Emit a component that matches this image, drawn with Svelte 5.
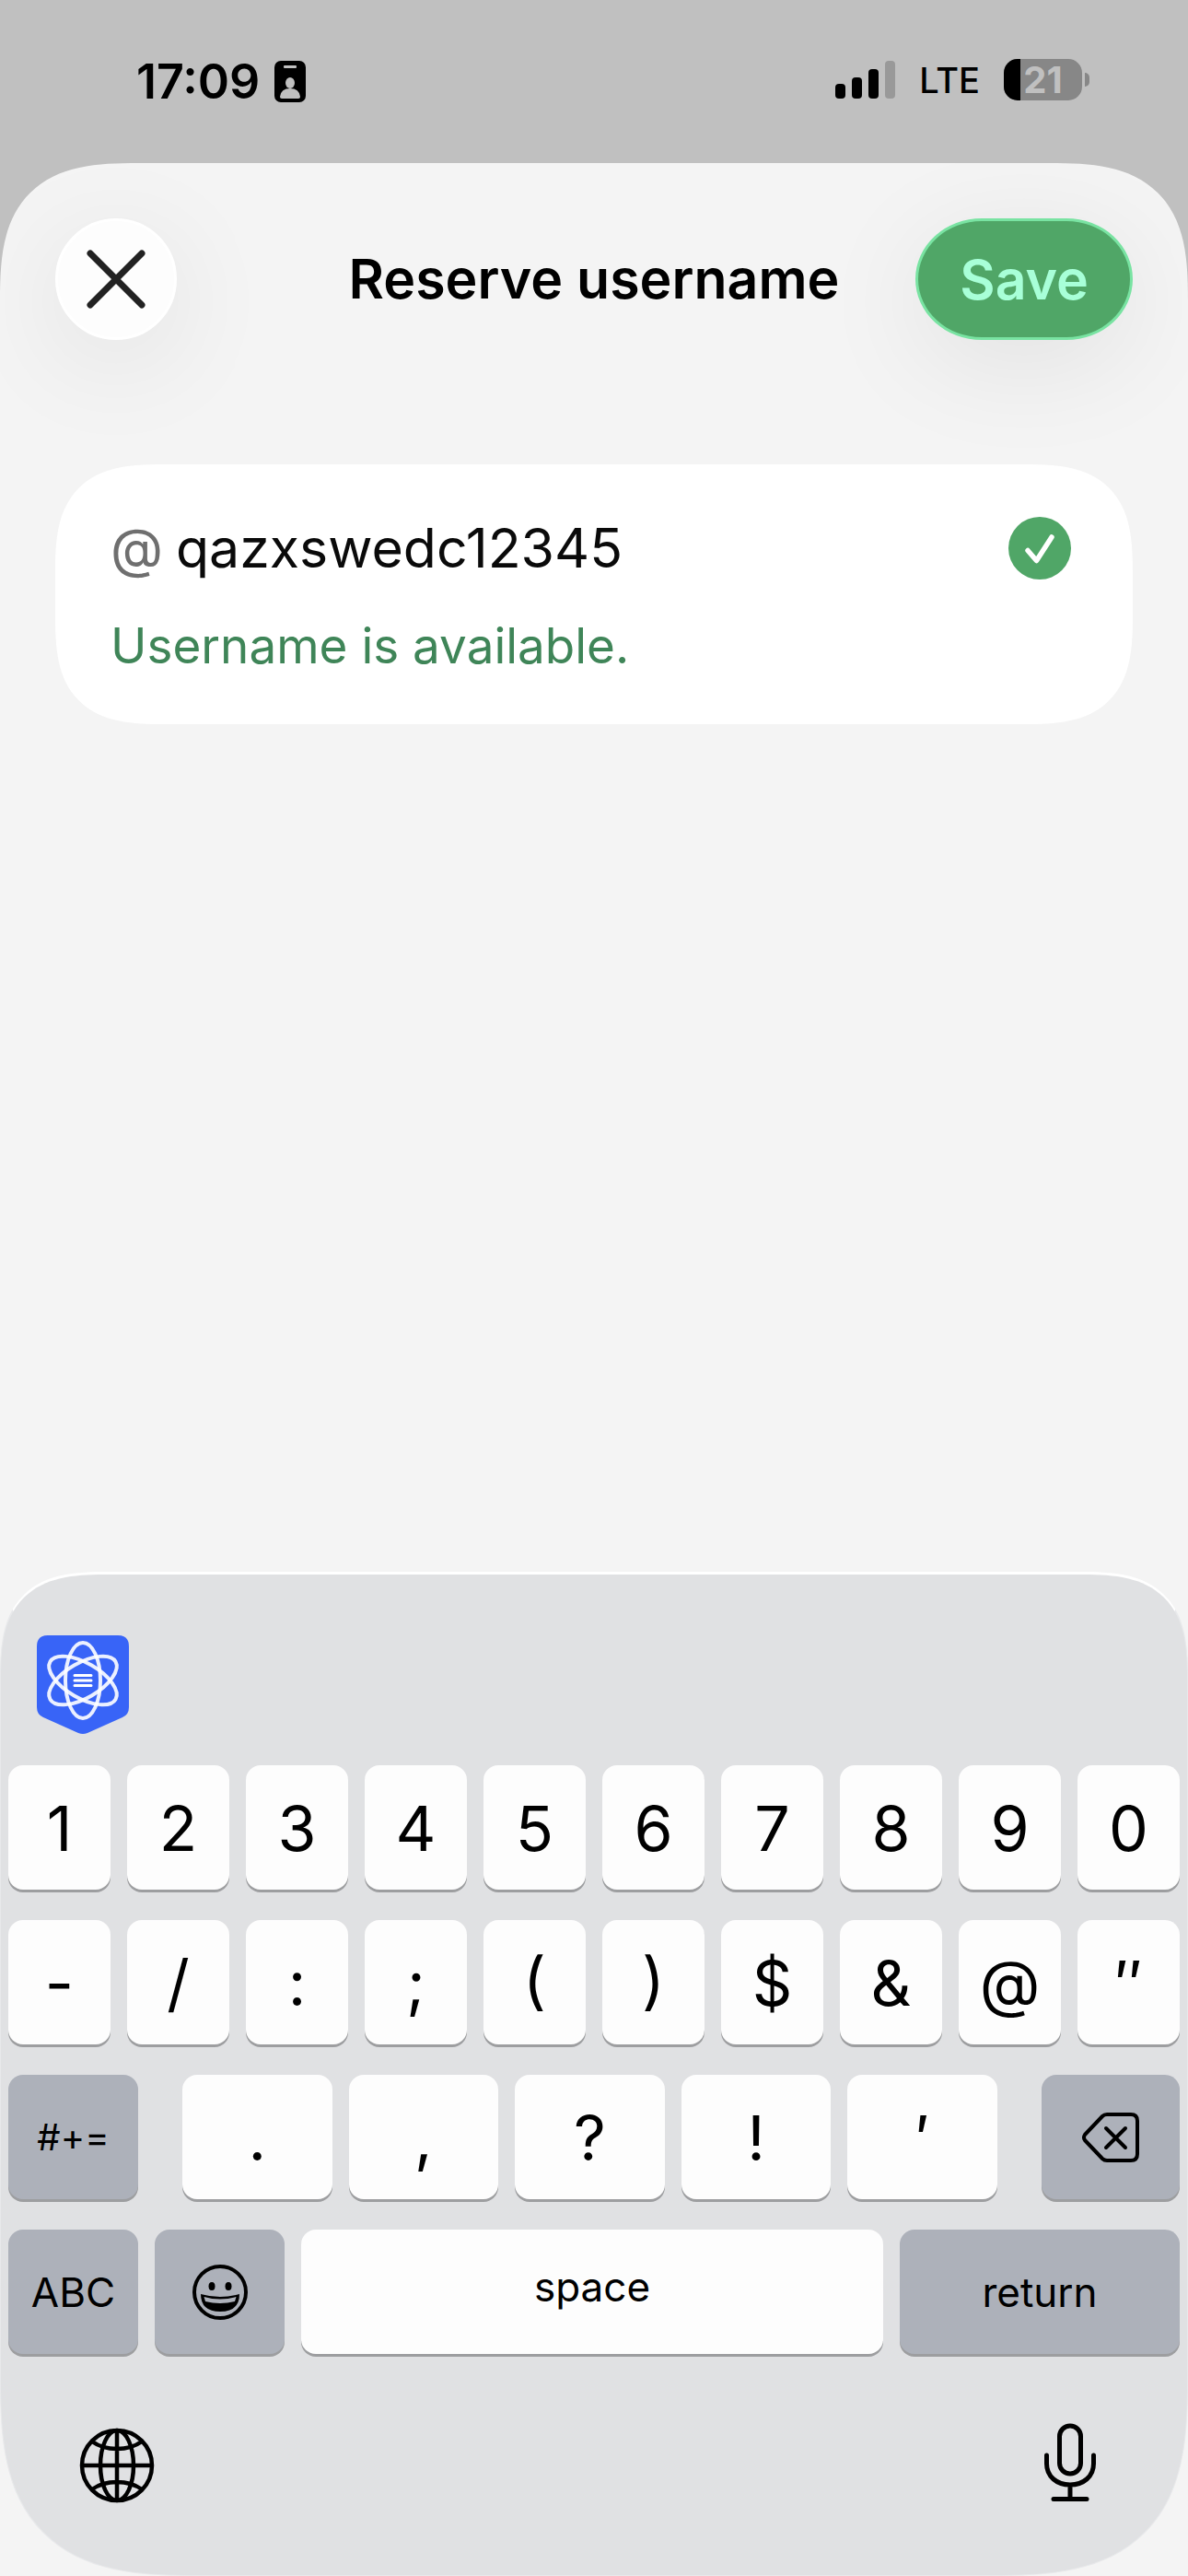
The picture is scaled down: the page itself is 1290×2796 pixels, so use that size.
<script lang="ts">
	let username = $state('qazxswedc12345');
	const battery = 21;
	const bars = [16, 23, 32, 41];
	const digits = ['1', '2', '3', '4', '5', '6', '7', '8', '9', '0'];
	const symbols = ['-', '/', ':', ';', '(', ')', '$', '&', '@', '″'];
	const punctuation = ['.', ',', '?', '!', '′'];

	function type(char: string) {
		username += char;
	}
	function erase() {
		username = username.slice(0, -1);
	}
</script>

<div class="screen">
	<header class="status">
		<div class="group">
			<time>17:09</time>
			<svg width="34" height="45" viewBox="0 0 34 45" aria-hidden="true">
				<rect width="34" height="45" rx="7" />
				<rect x="10" y="5" width="14" height="3" rx="1" fill="#c0c0c0" />
				<ellipse cx="17" cy="24" rx="5" ry="6" fill="#c0c0c0" />
				<path d="M6 39q1-9 11-9t11 9q0 2-2 2H8q-2 0-2-2z" fill="#c0c0c0" />
			</svg>
		</div>
		<div class="group right">
			<div class="signal">
				{#each bars as height, i}
					<span class:off={i === 3} style="height: {height}px"></span>
				{/each}
			</div>
			<span class="network">LTE</span>
			<div class="battery">
				<div class="cell">
					<div class="level" style="width: {battery}%"></div>
					<span>{battery}</span>
				</div>
				<div class="nub"></div>
			</div>
		</div>
	</header>

	<main class="sheet">
		<div class="bar">
			<button class="close" aria-label="Close">
				<svg width="66" height="66" viewBox="0 0 66 66" aria-hidden="true">
					<path d="M5 5l56 56M61 5L5 61" stroke="#222" stroke-width="7" stroke-linecap="round" />
				</svg>
			</button>
			<h1>Reserve username</h1>
			<button class="save">Save</button>
		</div>

		<section class="card">
			<div class="field">
				<label for="username">@</label>
				<input id="username" type="text" autocomplete="off" spellcheck="false" bind:value={username} />
				<svg width="68" height="68" viewBox="0 0 68 68" aria-hidden="true">
					<circle cx="34" cy="34" r="34" fill="#50a667" />
					<path
						d="M21 36.5l9.5 11L47 22"
						fill="none"
						stroke="#fff"
						stroke-width="5.5"
						stroke-linecap="round"
						stroke-linejoin="round"
					/>
				</svg>
			</div>
			<p>Username is available.</p>
		</section>
	</main>

	<div class="keyboard">
		<div class="tools">
			<button class="plain" aria-label="Assistant">
				<svg width="100" height="108" viewBox="0 0 100 108" aria-hidden="true">
					<path
						d="M12 0h76q12 0 12 12v66q0 8-7 11l-38 17q-5 2-10 0L7 89q-7-3-7-11V12Q0 0 12 0z"
						fill="#3864f7"
					/>
					<g fill="none" stroke="#fff" stroke-opacity="0.9" stroke-width="4">
						<ellipse cx="50" cy="49" rx="19" ry="41" />
						<ellipse cx="50" cy="49" rx="19" ry="41" transform="rotate(60 50 49)" />
						<ellipse cx="50" cy="49" rx="19" ry="41" transform="rotate(-60 50 49)" />
					</g>
					<path d="M41 43.5h18M41 49h18M41 54.5h18" stroke="#fff" stroke-width="3" stroke-linecap="round" />
				</svg>
			</button>
		</div>

		<div class="row">
			{#each digits as key}
				<button class="key" onclick={() => type(key)}>{key}</button>
			{/each}
		</div>
		<div class="row">
			{#each symbols as key}
				<button class="key" class:paren={key === '(' || key === ')'} onclick={() => type(key)}>{key}</button>
			{/each}
		</div>
		<div class="row middle">
			<button class="key fn small">#+=</button>
			<div class="row inner">
				{#each punctuation as key}
					<button class="key" onclick={() => type(key)}>{key}</button>
				{/each}
			</div>
			<button class="key fn" aria-label="Delete" onclick={erase}>
				<svg width="62" height="54" viewBox="0 0 62 54" aria-hidden="true">
					<g fill="none" stroke="#000" stroke-width="4" stroke-linecap="round" stroke-linejoin="round">
						<path d="M27 2h26q7 0 7 7v36q0 7-7 7H27q-3 0-5-2L3 30q-2-3 0-6L22 4q2-2 5-2z" />
						<path d="M26 17l21 21M47 17L26 38" />
					</g>
				</svg>
			</button>
		</div>
		<div class="row bottom">
			<button class="key fn">ABC</button>
			<button class="key fn" aria-label="Emoji">
				<svg width="62" height="62" viewBox="0 0 62 62" aria-hidden="true">
					<circle cx="31" cy="31" r="28" fill="none" stroke="#000" stroke-width="4" />
					<ellipse cx="22" cy="24.5" rx="3.5" ry="4.5" />
					<ellipse cx="40" cy="24.5" rx="3.5" ry="4.5" />
					<path d="M10 33q21 6 42 0q0 19-21 19T10 33z" />
					<path d="M13.5 36q17.5 5 35 0l-1.500 5q-16 4-32 0z" fill="#adb1ba" />
				</svg>
			</button>
			<button class="key fn space" onclick={() => type(' ')}>space</button>
			<button class="key fn">return</button>
		</div>

		<div class="footer">
			<button class="plain" aria-label="Next keyboard">
				<svg width="82" height="82" viewBox="0 0 82 82" aria-hidden="true">
					<g fill="none" stroke="#000" stroke-width="4.5">
						<circle cx="41" cy="41" r="38" />
						<ellipse cx="41" cy="41" rx="18" ry="38" />
						<path d="M41 3v76M3 41h76M14 15q11 8 27 8t27-8M14 67q11-8 27-8t27 8" />
					</g>
				</svg>
			</button>
			<button class="plain" aria-label="Dictate">
				<svg width="56" height="92" viewBox="0 0 56 92" aria-hidden="true">
					<g fill="none" stroke="#000" stroke-width="5" stroke-linecap="round">
						<rect x="16.5" y="3" width="23" height="52" rx="11.5" />
						<path d="M2.5 35v9c0 14 11 23 25.5 23s25.5-9 25.5-23v-9M28 67v15M10 82.5h36" />
					</g>
				</svg>
			</button>
		</div>
	</div>
</div>

<style>
	.screen {
		display: flex;
		flex-direction: column;
		min-height: 100vh;
		background: #c0c0c0;
		color: #000;
		font-family: Inter, Roboto, sans-serif;
	}
	button,
	input {
		font: inherit;
		color: inherit;
		border: 0;
		padding: 0;
		margin: 0;
		background: none;
	}
	button {
		cursor: pointer;
	}
	svg {
		display: block;
		flex: none;
	}

	.status {
		box-sizing: border-box;
		display: flex;
		justify-content: space-between;
		height: 177px;
		padding: 56px 107px 56px 148px;
	}
	.group {
		display: flex;
		align-items: center;
		gap: 16px;
	}
	.group.right {
		gap: 26px;
		padding-bottom: 4px;
	}
	time {
		font-size: 52px;
		line-height: 64px;
		font-weight: 600;
	}
	.signal {
		display: flex;
		align-items: flex-end;
		gap: 7px;
	}
	.signal span {
		width: 11px;
		border-radius: 4px;
		background: #000;
	}
	.signal .off {
		background: #999;
	}
	.network {
		font-size: 38px;
		font-weight: 500;
	}
	.battery {
		display: flex;
		align-items: center;
		gap: 3px;
	}
	.cell {
		position: relative;
		display: flex;
		align-items: center;
		justify-content: center;
		width: 85px;
		height: 45px;
		border-radius: 15px;
		background: #878787;
		color: #c0c0c0;
		font-size: 40px;
		line-height: 44px;
		font-weight: 700;
	}
	.cell span {
		position: relative;
	}
	.level {
		position: absolute;
		inset: 0 auto 0 0;
		border-radius: 15px 0 0 15px;
		background: #000;
	}
	.nub {
		width: 5px;
		height: 15px;
		border-radius: 0 5px 5px 0;
		background: #878787;
	}

	.sheet {
		flex: 1;
		padding: 60px 60px 0;
		border-radius: 150px 150px 0 0;
		corner-shape: superellipse(1.5);
		background: #f4f4f4;
		overflow: hidden;
	}
	.bar {
		display: grid;
		grid-template-columns: 1fr auto 1fr;
		align-items: center;
		margin-bottom: 135px;
	}
	h1 {
		margin: 0;
		font-size: 59px;
		line-height: 72px;
		font-weight: 600;
	}
	.close,
	.save {
		box-sizing: border-box;
		height: 132px;
		border-radius: 66px;
		box-shadow: 0 24px 120px rgba(0, 0, 0, 0.08);
	}
	.close {
		display: grid;
		place-items: center;
		width: 132px;
		border: 3px solid #fff;
		background: #fdfdfd;
	}
	.save {
		justify-self: end;
		padding: 0 45px;
		border: 3px solid #79e3a2;
		border-radius: 72px / 66px;
		background: #50a667;
		color: #a8ffd8;
		font-size: 59px;
		font-weight: 600;
	}

	.card {
		padding: 49px 67px 47px 60px;
		border-radius: 118px;
		corner-shape: superellipse(1.5);
		background: #fff;
	}
	.field {
		display: flex;
		align-items: center;
		gap: 14px;
		height: 84px;
		font-size: 59px;
		line-height: 84px;
	}
	.field label {
		color: #6f6f6f;
	}
	.field input {
		flex: 1;
		min-width: 0;
		height: 84px;
		color: #0a0a0a;
		outline: none;
	}
	.card p {
		margin: 27px 0 0;
		color: #3f8558;
		font-size: 53px;
		line-height: 75px;
	}

	.keyboard {
		display: flex;
		flex-direction: column;
		gap: 33px;
		padding: 66px 8px 73px;
		border: solid #e8e9eb;
		border-width: 3px 1px 1px;
		border-top-color: #fff;
		border-radius: 117px 117px 215px 215px;
		corner-shape: superellipse(1.5);
		background: #e0e1e3;
		/* fills the outer corners with the sheet colour */
		box-shadow: 0 0 0 120px #f4f4f4;
	}
	.tools {
		display: flex;
		padding-left: 31px;
	}
	.plain {
		display: block;
	}
	.row {
		display: grid;
		grid-template-columns: repeat(10, 1fr);
		gap: 18px;
	}
	.row.middle {
		grid-template-columns: 141fr 885fr 150fr;
		gap: 48px;
	}
	.row.inner {
		grid-template-columns: repeat(5, 1fr);
	}
	.row.bottom {
		grid-template-columns: 141fr 141fr 632fr 304fr;
	}
	.key {
		display: flex;
		align-items: center;
		justify-content: center;
		min-width: 0;
		height: 135px;
		border-radius: 16px;
		background: #fdfdfd;
		box-shadow: 0 3px 0 #9d9ea0;
		font-size: 68px;
	}
	.key.fn {
		background: #adb1ba;
		font-size: 44px;
	}
	.key.small {
		font-size: 40px;
	}
	.key.space {
		box-sizing: border-box;
		padding-bottom: 12px;
		background: #fdfdfd;
	}
	.paren {
		font-feature-settings: 'case';
	}
	.footer {
		display: flex;
		align-items: center;
		justify-content: space-between;
		margin-top: 42px;
		padding: 0 91px 0 77px;
	}
</style>
